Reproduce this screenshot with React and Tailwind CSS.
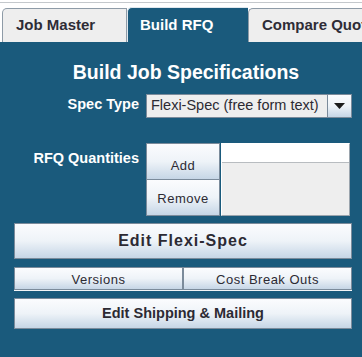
import React from "react";

const btn =
  "bg-gradient-to-b from-[#fbfcfe] via-[#eef3f8] to-[#c6d6e6] border border-[#7b8b9b] text-[#2c2a33] flex items-center justify-center";

const App = () => {
  return (
    <div
      className="w-[362px] h-[357px] overflow-hidden bg-white flex flex-col"
      style={{ fontFamily: '"Liberation Sans", Arial, sans-serif' }}
    >
      {/* top strip */}
      <div className="h-[2px] bg-white" />
      <div className="h-[1px] bg-[#c4c8cc]" />
      <div className="h-[4px] bg-white" />

      {/* tabs */}
      <div className="flex items-end h-[35px]">
        <div className="ml-[2px] w-[125px] h-[34px] bg-[#eeeeee] border-l border-t border-r border-[#8e9ba7] rounded-tl-[5px] pl-[13px] flex items-center text-[15px] font-bold text-[#2e2c36] whitespace-nowrap">
          Job Master
        </div>
        <div className="w-[121px] h-[35px] bg-[#1a5a7c] border-l border-t border-[#dfe8ef] rounded-tl-[5px] pl-[12px] flex items-center text-[15px] font-bold text-white whitespace-nowrap">
          Build RFQ
        </div>
        <div className="flex-1 h-[34px] bg-[#eeeeee] border-l border-t border-[#8e9ba7] rounded-tl-[5px] pl-[13px] flex items-center text-[15px] font-bold text-[#2e2c36] whitespace-nowrap overflow-hidden">
          Compare Quotes
        </div>
      </div>

      {/* panel */}
      <div className="flex-1 bg-[#1a5a7c] pl-[14px] pr-[10px] pt-[18px] flex flex-col">
        <div className="text-center text-white font-bold text-[19.5px] leading-[24px] pl-[6px] whitespace-nowrap">
          Build Job Specifications
        </div>

        {/* spec type */}
        <div className="flex mt-[10px] gap-[7px]">
          <div className="w-[125px] text-right text-white font-bold text-[14.5px] leading-[20px] whitespace-nowrap">
            Spec Type
          </div>
          <div className="flex w-[206px] h-[24px] border border-[#7b8b9b]">
            <div className="flex-1 bg-[#eeeeee] pl-[4px] flex items-center text-[14.5px] text-[#2c2a33] whitespace-nowrap overflow-hidden">
              Flexi-Spec (free form text)
            </div>
            <div className="w-[24px] border-l border-[#7b8b9b] bg-gradient-to-b from-[#fbfcfe] via-[#eef3f8] to-[#c6d6e6] flex items-center justify-center">
              <svg width="11" height="6" viewBox="0 0 11 6">
                <path d="M0 0 L11 0 L5.5 6 Z" fill="#1c1c1c" />
              </svg>
            </div>
          </div>
        </div>

        {/* rfq quantities */}
        <div className="flex mt-[25px] gap-[7px]">
          <div className="w-[125px] pt-[5px] text-right text-white font-bold text-[14.5px] leading-[20px] whitespace-nowrap">
            RFQ Quantities
          </div>
          <div className="flex flex-col w-[74px]">
            <button className={`${btn} h-[37px] pt-[8px] text-[13px] tracking-[0.5px]`}>
              Add
            </button>
            <button className={`${btn} h-[37px] -mt-[1px] pt-[3px] text-[13px] tracking-[0.5px]`}>
              Remove
            </button>
          </div>
          <div className="-ml-[6px] w-[129px] h-[73px] bg-[#eeeeee] border border-[#9aa4ad] border-l-white border-t-white flex flex-col">
            <div className="h-[19px] bg-white border-b border-[#b8bcc0]" />
          </div>
        </div>

        {/* edit flexi-spec */}
        <button className={`${btn} mt-[7px] h-[36px] w-full text-[16px] font-bold tracking-[1px]`}>
          Edit Flexi-Spec
        </button>

        {/* versions row */}
        <div className="flex mt-[8px] h-[23px] shadow-[0_1px_0_#f4f6f8]">
          <button className={`${btn} w-[169px] h-[23px] pt-[2px] text-[13px] tracking-[0.5px]`}>
            Versions
          </button>
          <button className={`${btn} flex-1 h-[23px] pt-[2px] text-[13px] tracking-[0.5px]`}>
            Cost Break Outs
          </button>
        </div>

        {/* edit shipping */}
        <button className={`${btn} mt-[8px] h-[31px] w-full text-[14.5px] font-bold`}>
          Edit Shipping &amp; Mailing
        </button>
      </div>
    </div>
  );
};

export default App;
